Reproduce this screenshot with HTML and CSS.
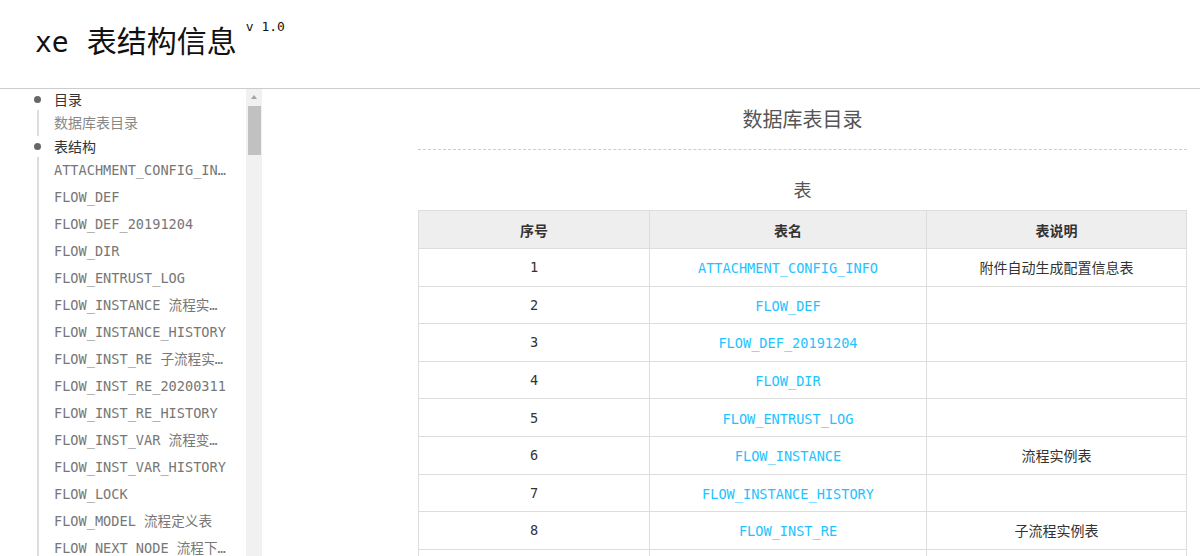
FILE: index.html
```html
<!DOCTYPE html>
<html lang="zh-CN">
<head>
<meta charset="utf-8">
<title>xe 表结构信息</title>
<link rel="stylesheet" href="styles.css">
</head>
<body>
<header class="top">
  <h1 class="title"><span class="brand">xe</span> 表结构信息<sup class="ver">v 1.0</sup></h1>
</header>
<div class="layout">
  <nav class="side">
    <div class="side-body">
      <ul class="toc">
        <li class="group">
          <div class="group-title">目录</div>
          <ul class="sub sub-first">
            <li class="sub-item cat">数据库表目录</li>
          </ul>
        </li>
        <li class="group">
          <div class="group-title">表结构</div>
          <ul class="sub">
            <li class="sub-item">ATTACHMENT_CONFIG_INFO 附件自动生成配置信息表</li>
            <li class="sub-item">FLOW_DEF</li>
            <li class="sub-item">FLOW_DEF_20191204</li>
            <li class="sub-item">FLOW_DIR</li>
            <li class="sub-item">FLOW_ENTRUST_LOG</li>
            <li class="sub-item">FLOW_INSTANCE 流程实例表</li>
            <li class="sub-item">FLOW_INSTANCE_HISTORY</li>
            <li class="sub-item">FLOW_INST_RE 子流程实例表</li>
            <li class="sub-item">FLOW_INST_RE_20200311</li>
            <li class="sub-item">FLOW_INST_RE_HISTORY</li>
            <li class="sub-item">FLOW_INST_VAR 流程变量表</li>
            <li class="sub-item">FLOW_INST_VAR_HISTORY</li>
            <li class="sub-item">FLOW_LOCK</li>
            <li class="sub-item">FLOW_MODEL 流程定义表</li>
            <li class="sub-item">FLOW_NEXT_NODE 流程下一节点表</li>
            <li class="sub-item">FLOW_NODE 流程节点表</li>
            <li class="sub-item">FLOW_NODE_HISTORY</li>
            <li class="sub-item">FLOW_TASK 流程任务表</li>
          </ul>
        </li>
      </ul>
    </div>
    <div class="vscroll" aria-hidden="true">
      <div class="vscroll-up"></div>
      <div class="vscroll-gap"></div>
      <div class="vscroll-thumb"></div>
    </div>
  </nav>
  <main class="main">
    <h2 class="page-title">数据库表目录</h2>
    <h3 class="sec-title">表</h3>
    <table class="tbl">
      <colgroup>
        <col class="c1"><col class="c2"><col class="c3">
      </colgroup>
      <thead>
        <tr><th>序号</th><th>表名</th><th>表说明</th></tr>
      </thead>
      <tbody>
        <tr><td class="num">1</td><td><a class="lnk" href="#">ATTACHMENT_CONFIG_INFO</a></td><td>附件自动生成配置信息表</td></tr>
        <tr><td class="num">2</td><td><a class="lnk" href="#">FLOW_DEF</a></td><td></td></tr>
        <tr><td class="num">3</td><td><a class="lnk" href="#">FLOW_DEF_20191204</a></td><td></td></tr>
        <tr><td class="num">4</td><td><a class="lnk" href="#">FLOW_DIR</a></td><td></td></tr>
        <tr><td class="num">5</td><td><a class="lnk" href="#">FLOW_ENTRUST_LOG</a></td><td></td></tr>
        <tr><td class="num">6</td><td><a class="lnk" href="#">FLOW_INSTANCE</a></td><td>流程实例表</td></tr>
        <tr><td class="num">7</td><td><a class="lnk" href="#">FLOW_INSTANCE_HISTORY</a></td><td></td></tr>
        <tr><td class="num">8</td><td><a class="lnk" href="#">FLOW_INST_RE</a></td><td>子流程实例表</td></tr>
        <tr><td class="num">9</td><td><a class="lnk" href="#">FLOW_INST_RE_20200311</a></td><td></td></tr>
        <tr><td class="num">10</td><td><a class="lnk" href="#">FLOW_INST_RE_HISTORY</a></td><td></td></tr>
      </tbody>
    </table>
  </main>
</div>
</body>
</html>
```

FILE: styles.css
```css
html, body {
  margin: 0;
  padding: 0;
  height: 100%;
  overflow: hidden;
  background: #fff;
}
body {
  font-family: "Noto Sans CJK SC", "DejaVu Sans", sans-serif;
  color: #333;
  display: flex;
  flex-direction: column;
}
.top {
  height: 88px;
  flex: none;
  border-bottom: 1px solid #ccc;
  box-sizing: content-box;
}
.title {
  margin: 0;
  padding: 18px 0 0 35px;
  font-size: 30px;
  font-weight: normal;
  line-height: 48px;
  color: #111;
  font-family: "DejaVu Sans Mono", "Noto Sans CJK SC", monospace;
}
.brand {
  font-family: "DejaVu Sans Mono", monospace;
  font-size: 28px;
}
.ver {
  font-size: 13px;
  margin-left: 9px;
  vertical-align: 0;
  position: relative;
  top: -21px;
  font-family: "DejaVu Sans Mono", monospace;
}
.layout {
  flex: 1;
  display: flex;
  min-height: 0;
}
.side {
  width: 262px;
  flex: none;
  display: flex;
  min-height: 0;
}
.side-body {
  flex: 1;
  min-width: 0;
  overflow: hidden;
}
.vscroll {
  width: 16px;
  flex: none;
  background: #f1f1f1;
  display: flex;
  flex-direction: column;
  align-items: flex-end;
}
.vscroll-up {
  width: 16px;
  height: 17px;
  position: relative;
}
.vscroll-up::after {
  content: "";
  position: absolute;
  left: 5px;
  top: 6px;
  border-left: 3.5px solid transparent;
  border-right: 3.5px solid transparent;
  border-bottom: 4px solid #a3a3a3;
}
.vscroll-thumb {
  width: 13px;
  margin-right: 1px;
  height: 49px;
  background: #c1c1c1;
}
.toc {
  list-style: none;
  margin: 0;
  padding: 0;
}
.group {
  position: relative;
}
.group-title {
  position: relative;
  padding-left: 54px;
  font-size: 14px;
  line-height: 21px;
  color: #333;
}
.group-title::before {
  content: "";
  position: absolute;
  left: 34px;
  top: 7px;
  width: 7px;
  height: 7px;
  border-radius: 50%;
  background: #666;
}
.sub {
  list-style: none;
  margin: 0 0 0 37px;
  padding: 0 0 0 15px;
  border-left: 2px solid #ddd;
}
.sub-item {
  width: 176px;
  padding: 3px 0 4px;
  line-height: 20px;
  font-size: 13.6px;
  color: #777;
  font-family: "DejaVu Sans Mono", "Noto Sans CJK SC", monospace;
  white-space: nowrap;
  overflow: hidden;
  text-overflow: ellipsis;
}
.sub-first .sub-item {
  padding: 2px 0 4px;
}
.sub-item.cat {
  font-family: "Noto Sans CJK SC", sans-serif;
  font-size: 14px;
  color: #888;
}
.main {
  flex: 1;
  min-width: 0;
  overflow: hidden;
  padding: 0 13px 0 156px;
}
.page-title {
  margin: 0;
  padding: 16px 0 16px;
  font-size: 20px;
  line-height: 28px;
  font-weight: normal;
  text-align: center;
  color: #555;
  border-bottom: 1px dashed #ccc;
}
.sec-title {
  margin: 0;
  padding: 26px 0 8px;
  font-size: 18px;
  line-height: 26px;
  font-weight: normal;
  text-align: center;
  color: #555;
}
.tbl {
  width: 100%;
  border-collapse: collapse;
  table-layout: fixed;
  font-size: 14px;
  color: #333;
}
.c1 { width: 231px; }
.c2 { width: 277px; }
.tbl th, .tbl td {
  border: 1px solid #ddd;
  text-align: center;
  height: 37.6px;
  padding: 0 8px;
  box-sizing: border-box;
}
.tbl th {
  background: #eee;
  font-weight: bold;
  height: 38px;
  font-size: 14px;
}
.tbl td.num {
  font-family: "DejaVu Sans Mono", monospace;
  font-size: 13.6px;
}
.lnk {
  color: #1ec3ff;
  text-decoration: none;
  font-family: "DejaVu Sans Mono", monospace;
  font-size: 13.6px;
}
```
